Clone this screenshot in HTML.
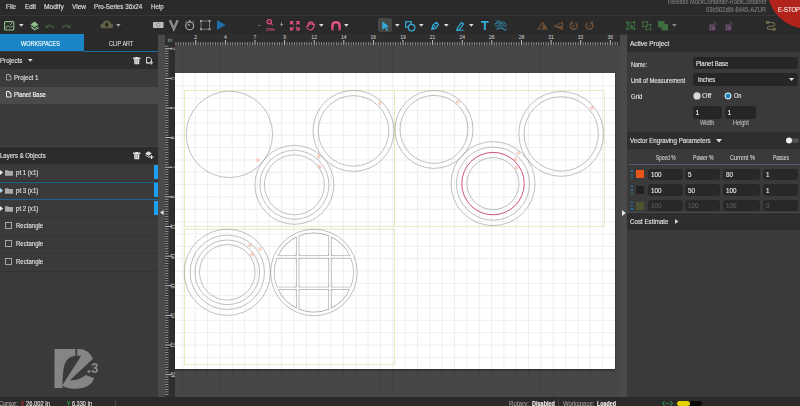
<!DOCTYPE html><html><head><meta charset="utf-8"><style>
*{margin:0;padding:0;box-sizing:border-box}
html,body{width:800px;height:406px;overflow:hidden;background:#2b2b2b;font-family:"Liberation Sans", sans-serif;}
.a{position:absolute}
.t{position:absolute;white-space:nowrap;line-height:1;transform-origin:0 50%;-webkit-text-stroke:0.12px currentColor}
svg{position:absolute;overflow:visible}
</style></head><body>
<div class="a" style="left:0px;top:0px;width:800px;height:15px;background:#2a2a2a;"></div><div class="a" style="left:0px;top:15px;width:800px;height:1px;background:#363636;"></div><div class="t" style="left:6.00px;top:2.80px;font-size:7px;color:#e2e2e2;transform:scaleX(0.887);">File</div><div class="t" style="left:24.50px;top:2.80px;font-size:7px;color:#e2e2e2;transform:scaleX(0.912);">Edit</div><div class="t" style="left:44.00px;top:2.80px;font-size:7px;color:#e2e2e2;transform:scaleX(0.960);">Modify</div><div class="t" style="left:72.00px;top:2.80px;font-size:7px;color:#e2e2e2;transform:scaleX(0.931);">View</div><div class="t" style="left:94.30px;top:2.80px;font-size:7px;color:#e2e2e2;transform:scaleX(0.891);">Pro-Series 36x24</div><div class="t" style="left:151.00px;top:2.80px;font-size:7px;color:#e2e2e2;transform:scaleX(0.889);">Help</div><div class="t" style="left:667.70px;top:-0.70px;font-size:6.6px;color:#7e7e7e;transform:scaleX(0.849);">Release MockContainer-RockContainer</div><div class="t" style="left:706.30px;top:6.80px;font-size:6.6px;color:#7e7e7e;transform:scaleX(0.881);">03b502d6f-8445-AZUR</div><div class="a" style="left:0px;top:16px;width:800px;height:18px;background:#2a2a2a;"></div><div class="a" style="left:0px;top:34px;width:800px;height:1px;background:#383838;"></div><svg style="left:760px;top:-20px;" width="60" height="60" viewBox="0 0 60 60"><circle cx="46" cy="10" r="38.3" fill="#b2231c"/></svg><div class="t" style="left:778.00px;top:6.60px;font-size:6.8px;color:#f4f4f4;transform:scaleX(0.873);">E-STOP</div><svg style="left:4px;top:20.5px;" width="10.5" height="9.5" viewBox="0 0 10.5 9.5"><rect x="0.6" y="0.6" width="9.2" height="8.4" rx="1" fill="none" stroke="#8fc08a" stroke-width="1.1"/><path d="M1.5 7.5 L4 4.5 L6 6.5 L7.5 5 L9 6.5" fill="none" stroke="#8fc08a" stroke-width="1"/><path d="M6 4 L8 2" stroke="#8fc08a" stroke-width="1"/></svg><svg style="left:18.5px;top:24.3px;" width="4.6" height="2.8" viewBox="0 0 4.6 2.8"><path d="M0 0 L4.6 0 L2.3 2.8 Z" fill="#e0e0e0"/></svg><svg style="left:29.5px;top:20.5px;" width="9.5" height="9.5" viewBox="0 0 9.5 9.5"><path d="M4.5 0.5 L8.5 3.5 L4.5 6.3 L0.5 3.5 Z" fill="#8fc08a"/><path d="M0.8 5.3 L4.5 8 L8.3 5.3" fill="none" stroke="#8fc08a" stroke-width="1"/><path d="M1.5 6.8 L4.5 9 L8.8 6.8" fill="none" stroke="#8fc08a" stroke-width="0.9"/></svg><svg style="left:44.5px;top:23px;" width="10" height="6" viewBox="0 0 10 6"><path d="M2.5 3.2 Q5.5 0.8 8.8 5" fill="none" stroke="#3e583b" stroke-width="1.7"/><path d="M0.2 1.5 L0.5 5.5 L4.3 4.5 Z" fill="#3e583b"/></svg><svg style="left:61px;top:23px;" width="10" height="6" viewBox="0 0 10 6"><path d="M7.5 3.2 Q4.5 0.8 1.2 5" fill="none" stroke="#3e583b" stroke-width="1.7"/><path d="M9.8 1.5 L9.5 5.5 L5.7 4.5 Z" fill="#3e583b"/></svg><svg style="left:100.3px;top:20.3px;" width="13.5" height="8.5" viewBox="0 0 13.5 8.5"><path d="M3 8.3 Q0 8.3 0.3 5.5 Q0.7 3.6 2.8 3.7 Q3.5 0.3 7 0.4 Q10.3 0.5 10.8 3.6 Q13.4 3.9 13.3 6.2 Q13.1 8.3 10.5 8.3 Z" fill="#626046"/><path d="M6.7 2.3 L9 4.8 L7.6 4.8 L7.6 7 L5.8 7 L5.8 4.8 L4.4 4.8 Z" fill="#1f1f1f"/></svg><svg style="left:116.3px;top:24.2px;" width="4.6" height="2.8" viewBox="0 0 4.6 2.8"><path d="M0 0 L4.6 0 L2.3 2.8 Z" fill="#a8a8a8"/></svg><svg style="left:152.6px;top:21.9px;" width="10.5" height="6" viewBox="0 0 10.5 6"><rect x="0" y="0" width="10.5" height="5.9" rx="0.6" fill="#bdbdbd"/><circle cx="5.25" cy="3" r="1.9" fill="none" stroke="#8a8a8a" stroke-width="0.8"/></svg><svg style="left:168.8px;top:19.8px;" width="9.6" height="10" viewBox="0 0 9.6 10"><path d="M0.9 0.3 L4.8 9 L8.7 0.3" fill="none" stroke="#a0a0a0" stroke-width="2.2"/><path d="M0.9 0.3 L4.8 9 L8.7 0.3" fill="none" stroke="#555" stroke-width="0.5"/></svg><svg style="left:184.9px;top:19.8px;" width="9.4" height="10.5" viewBox="0 0 9.4 10.5"><circle cx="4.7" cy="5.9" r="3.9" fill="none" stroke="#b8b8b8" stroke-width="1.1"/><path d="M4.7 5.9 L3.2 4.2" stroke="#b8b8b8" stroke-width="1.1"/><path d="M3.7 0.8 L5.7 0.8 M4.7 0.8 L4.7 2" stroke="#b8b8b8" stroke-width="0.9"/><path d="M0.5 2.2 L1.5 1.3 M8.9 2.2 L7.9 1.3" stroke="#b8b8b8" stroke-width="0.9"/></svg><svg style="left:199.8px;top:19.8px;" width="10.6" height="10.2" viewBox="0 0 10.6 10.2"><rect x="1" y="1" width="8.6" height="8.2" fill="none" stroke="#8c8c8c" stroke-width="0.8"/><g fill="#a0a0a0"><rect x="0" y="0" width="2" height="2"/><rect x="8.6" y="0" width="2" height="2"/><rect x="0" y="8.2" width="2" height="2"/><rect x="8.6" y="8.2" width="2" height="2"/></g></svg><svg style="left:216.7px;top:20.1px;" width="9" height="10" viewBox="0 0 9 10"><path d="M0 0 L8.7 5 L0 10 Z" fill="#1f6ea8"/></svg><div class="t" style="left:258.00px;top:22.30px;font-size:6px;color:#c0c0c0;transform:scaleX(1.251);">-</div><svg style="left:266px;top:19.4px;" width="7.5" height="6" viewBox="0 0 7.5 6"><circle cx="3.3" cy="2.7" r="2.2" fill="none" stroke="#e2507f" stroke-width="1.1"/><path d="M4.9 4.3 L6.6 5.8" stroke="#e2507f" stroke-width="1.3"/><path d="M2.3 2.7 L4.3 2.7" stroke="#e2507f" stroke-width="0.7"/></svg><div class="t" style="left:266.00px;top:27.65px;font-size:4.3px;color:#e2507f;transform:scaleX(0.988);">23%</div><div class="t" style="left:279.80px;top:22.05px;font-size:6.5px;color:#c8c8c8;transform:scaleX(0.896);">+</div><svg style="left:289.5px;top:20.7px;" width="9.6" height="9.6" viewBox="0 0 9.6 9.6"><g stroke="#e2507f" stroke-width="1.2" fill="none"><path d="M0.6 3.4 L0.6 0.6 L3.4 0.6 M0.6 0.6 L3.6 3.6"/><path d="M9 3.4 L9 0.6 L6.2 0.6 M9 0.6 L6 3.6"/><path d="M0.6 6.2 L0.6 9 L3.4 9 M0.6 9 L3.6 6"/><path d="M9 6.2 L9 9 L6.2 9 M9 9 L6 6"/></g></svg><svg style="left:305.8px;top:20.6px;" width="10" height="10" viewBox="0 0 10 10"><path d="M2.3 5 L2.3 2.6 Q2.3 1.6 3.3 1.8 L3.5 4 L3.5 1.2 Q4.5 0.4 5 1.3 L5 3.8 L5.2 1.2 Q6.2 0.6 6.7 1.6 L6.6 4 Q7.2 2.8 8.3 3.2 Q8.7 4.2 8 5.5 Q7 8.7 4.8 9 Q2.5 9.2 1.2 7.2 Q0.2 5.8 1 5 Q1.6 4.6 2.3 5 Z" fill="none" stroke="#e2507f" stroke-width="1.1"/></svg><svg style="left:318.8px;top:24.3px;" width="4.6" height="2.8" viewBox="0 0 4.6 2.8"><path d="M0 0 L4.6 0 L2.3 2.8 Z" fill="#e0e0e0"/></svg><svg style="left:330.5px;top:20.8px;" width="10" height="9.5" viewBox="0 0 10 9.5"><path d="M1.4 9.3 L1.4 5 Q1.4 1.3 5 1.3 Q8.6 1.3 8.6 5 L8.6 9.3" fill="none" stroke="#e2507f" stroke-width="2.6"/><path d="M0.1 7.8 L2.7 7.8 M7.3 7.8 L9.9 7.8" stroke="#2a2a2a" stroke-width="0.5"/></svg><svg style="left:343.5px;top:24.3px;" width="4.6" height="2.8" viewBox="0 0 4.6 2.8"><path d="M0 0 L4.6 0 L2.3 2.8 Z" fill="#e0e0e0"/></svg><div class="a" style="left:378.1px;top:18.1px;width:14.1px;height:14.3px;background:#474747;border-radius:2px"></div><svg style="left:381.5px;top:20.5px;" width="7.5" height="10" viewBox="0 0 7.5 10"><path d="M0.3 0.3 L7 5.8 L4.3 6 L6 9.3 L4.7 9.8 L3.1 6.5 L0.3 8.8 Z" fill="#34aedb"/></svg><svg style="left:394.8px;top:24.3px;" width="4.6" height="2.8" viewBox="0 0 4.6 2.8"><path d="M0 0 L4.6 0 L2.3 2.8 Z" fill="#e0e0e0"/></svg><svg style="left:405px;top:20.8px;" width="10.5" height="10.5" viewBox="0 0 10.5 10.5"><rect x="0.7" y="0.7" width="5.5" height="5.5" fill="none" stroke="#34aedb" stroke-width="1.2"/><circle cx="6.6" cy="6.6" r="3.3" fill="#2a2a2a" stroke="#34aedb" stroke-width="1.2"/></svg><svg style="left:419.2px;top:24.3px;" width="4.6" height="2.8" viewBox="0 0 4.6 2.8"><path d="M0 0 L4.6 0 L2.3 2.8 Z" fill="#e0e0e0"/></svg><svg style="left:430.5px;top:20.8px;" width="8" height="9" viewBox="0 0 8 9"><path d="M0.8 8.3 L1.8 4 L5.5 1.3 L7.5 3.5 L4.8 7.2 Z" fill="none" stroke="#34aedb" stroke-width="1.2"/><circle cx="3.6" cy="5" r="0.9" fill="#34aedb"/><path d="M0.8 8.3 L3 6" stroke="#34aedb" stroke-width="0.8"/></svg><svg style="left:444px;top:24.3px;" width="4.6" height="2.8" viewBox="0 0 4.6 2.8"><path d="M0 0 L4.6 0 L2.3 2.8 Z" fill="#e0e0e0"/></svg><svg style="left:455.5px;top:20.8px;" width="8" height="9.5" viewBox="0 0 8 9.5"><path d="M1.2 7.5 L5.5 1.3 L7.5 2.8 L3.3 9 L1 9.2 Z" fill="none" stroke="#34aedb" stroke-width="1.2"/><path d="M0 9.3 L7.8 9.3" stroke="#34aedb" stroke-width="0.9"/></svg><svg style="left:468.8px;top:24.3px;" width="4.6" height="2.8" viewBox="0 0 4.6 2.8"><path d="M0 0 L4.6 0 L2.3 2.8 Z" fill="#e0e0e0"/></svg><svg style="left:480.7px;top:20.7px;" width="7.6" height="9.1" viewBox="0 0 7.6 9.1"><path d="M0 0 L7.6 0 L7.6 1.8 L4.75 1.8 L4.75 9.1 L2.85 9.1 L2.85 1.8 L0 1.8 Z" fill="#34aedb"/></svg><svg style="left:494px;top:20.3px;" width="13.5" height="10.7" viewBox="0 0 13.5 10.7"><g stroke="#34aedb" fill="none" opacity="0.85"><path d="M2 0.5 L5.5 5" stroke-width="0.9"/><path d="M4.5 0.5 L7.5 4.5" stroke-width="1.1"/><path d="M0.5 4.2 L4 2.5 M6.5 2.2 L9.5 4.5 M8.5 1.5 L12.5 4.5" stroke-width="0.9"/><path d="M0.8 5.8 L12.8 5.8" stroke-width="0.6"/><path d="M1.5 6.8 L12.5 6.8" stroke-width="0.5" opacity="0.5"/><path d="M2.5 10 L4.5 8 M3 8.2 L9 8.2 M8.5 8 L10.5 10 M9.5 9.8 L12.5 9.8" stroke-width="1"/></g></svg><svg style="left:537.8px;top:22px;" width="9.2" height="7.3" viewBox="0 0 9.2 7.3"><path d="M4.6 0.3 L9 7 L0.2 7 Z" fill="none" stroke="#6b4f37" stroke-width="1.1"/><path d="M4.6 0.3 L4.6 7 L9 7 Z" fill="#6b4f37"/></svg><svg style="left:554.3px;top:21.8px;" width="8.7" height="7.8" viewBox="0 0 8.7 7.8"><path d="M8.4 0.3 L8.4 7.5 L0.3 3.9 Z" fill="none" stroke="#6b4f37" stroke-width="1.1"/><path d="M8.4 3.9 L8.4 7.5 L0.3 3.9 Z" fill="#6b4f37"/></svg><svg style="left:569px;top:21.3px;" width="9.2" height="9" viewBox="0 0 9.2 9"><path d="M3.2 1.9 A3.4 3.4 0 1 0 6.4 1.9" fill="none" stroke="#6b4f37" stroke-width="1.5"/><path d="M0.8 0.3 L4.6 1.2 L2 3.9 Z" fill="#6b4f37"/><circle cx="4.6" cy="5" r="0.9" fill="#6b4f37"/></svg><svg style="left:584.8px;top:21.3px;" width="9.2" height="9" viewBox="0 0 9.2 9"><path d="M6 1.9 A3.4 3.4 0 1 1 2.8 1.9" fill="none" stroke="#6b4f37" stroke-width="1.5"/><path d="M8.4 0.3 L4.6 1.2 L7.2 3.9 Z" fill="#6b4f37"/><circle cx="4.6" cy="5" r="0.9" fill="#6b4f37"/></svg><svg style="left:626px;top:20.8px;" width="9.6" height="9.2" viewBox="0 0 9.6 9.2"><rect x="1.3" y="1.3" width="7" height="6.6" fill="none" stroke="#3f6d40" stroke-width="0.8"/><g fill="#3f6d40"><circle cx="1.3" cy="1.3" r="1.2"/><circle cx="8.3" cy="1.3" r="1.2"/><circle cx="1.3" cy="7.9" r="1.2"/><circle cx="8.3" cy="7.9" r="1.2"/></g><circle cx="3.8" cy="4" r="1.5" fill="none" stroke="#3f6d40" stroke-width="0.8"/><rect x="4.6" y="4.5" width="2.5" height="2.5" fill="#3f6d40"/></svg><svg style="left:642px;top:20.8px;" width="9.6" height="9.2" viewBox="0 0 9.6 9.2"><g fill="none" stroke="#3f6d40" stroke-width="0.8"><rect x="1" y="1" width="4.5" height="4.5"/><rect x="4.2" y="3.8" width="4.5" height="4.5"/></g><g fill="#3f6d40"><circle cx="1" cy="1" r="1"/><circle cx="5.5" cy="1" r="1"/><circle cx="1" cy="5.5" r="1"/><circle cx="8.7" cy="3.8" r="1"/><circle cx="4.2" cy="8.3" r="1"/><circle cx="8.7" cy="8.3" r="1"/></g></svg><svg style="left:657.5px;top:20.9px;" width="10" height="9.4" viewBox="0 0 10 9.4"><rect x="0" y="0" width="6.6" height="6.4" fill="#3f6d40"/><rect x="3.4" y="3" width="6.6" height="6.4" fill="#3f6d40"/></svg><svg style="left:672px;top:24.4px;" width="4.6" height="2.8" viewBox="0 0 4.6 2.8"><path d="M0 0 L4.6 0 L2.3 2.8 Z" fill="#8a8a8a"/></svg><svg style="left:708.5px;top:20.5px;" width="8.5" height="9.5" viewBox="0 0 8.5 9.5"><rect x="0.5" y="3.5" width="5.5" height="5.8" fill="#6e4e70"/><rect x="2.5" y="5.2" width="4.2" height="4.3" fill="#6e4e70" stroke="#2a2a2a" stroke-width="0.5"/><path d="M4.5 1 Q7 1 7.5 3.8" fill="none" stroke="#6e4e70" stroke-width="0.9"/></svg><svg style="left:725px;top:20.5px;" width="8.5" height="9.5" viewBox="0 0 8.5 9.5"><rect x="0.5" y="3.5" width="5.5" height="5.8" fill="#6e4e70"/><rect x="2.2" y="5" width="4.2" height="4.3" fill="#6e4e70" stroke="#2a2a2a" stroke-width="0.4"/><path d="M4.5 1 Q7 1 7.5 3.8" fill="none" stroke="#6e4e70" stroke-width="0.9"/></svg><svg style="left:765.5px;top:21px;" width="10" height="9.5" viewBox="0 0 10 9.5"><path d="M2.3 1.5 L6.8 1.5 Q8.8 1.5 8.8 3.5 Q8.8 5.3 6.8 5.3 L3.2 5.3 Q1.2 5.3 1.2 6.9 Q1.2 8.3 3.2 8.3 L7.3 8.3" fill="none" stroke="#8f8a5a" stroke-width="0.8"/><rect x="0.4" y="0.5" width="1.9" height="1.9" fill="none" stroke="#8f8a5a" stroke-width="0.7"/><rect x="7.4" y="7.3" width="1.9" height="1.9" fill="none" stroke="#8f8a5a" stroke-width="0.7"/></svg><div class="a" style="left:0px;top:35px;width:158px;height:362px;background:#3a3a3a;"></div><div class="a" style="left:0px;top:34px;width:84px;height:17px;background:#1a86c8;"></div><div class="a" style="left:84px;top:34px;width:74px;height:17px;background:#2a2a2a;"></div><div class="a" style="left:84px;top:51px;width:74px;height:1px;background:#1a6ca3;"></div><div class="t" style="left:21.20px;top:40.00px;font-size:7px;color:#ffffff;transform:scaleX(0.783);">WORKSPACES</div><div class="t" style="left:108.80px;top:40.00px;font-size:7px;color:#d8d8d8;transform:scaleX(0.790);">CLIP ART</div><div class="a" style="left:0px;top:52px;width:158px;height:17px;background:#2c2c2c;"></div><div class="t" style="left:0.00px;top:56.50px;font-size:7px;color:#e4e4e4;transform:scaleX(0.882);">Projects</div><div class="a" style="left:0px;top:69px;width:158px;height:18px;background:#3a3a3a;"></div><div class="a" style="left:0px;top:87px;width:158px;height:17px;background:#4a4a4a;"></div><div class="t" style="left:13.80px;top:73.60px;font-size:7px;color:#e0e0e0;transform:scaleX(0.883);">Project 1</div><div class="t" style="left:13.80px;top:91.00px;font-size:7px;color:#ffffff;transform:scaleX(0.845);">Planet Base</div><div class="a" style="left:0px;top:146px;width:158px;height:1px;background:#454545;"></div><div class="a" style="left:0px;top:147px;width:158px;height:17px;background:#2c2c2c;"></div><div class="t" style="left:0.00px;top:151.50px;font-size:7px;color:#e4e4e4;transform:scaleX(0.857);">Layers &amp; Objects</div><div class="a" style="left:0px;top:181px;width:158px;height:1px;background:#333333;"></div><div class="t" style="left:15.90px;top:168.50px;font-size:7px;color:#e4e4e4;transform:scaleX(0.869);">pt 1 (x1)</div><div class="a" style="left:154px;top:165px;width:3.6px;height:14.2px;background:#1aa0ee;"></div><div class="a" style="left:0px;top:199px;width:158px;height:1px;background:#333333;"></div><div class="t" style="left:15.90px;top:186.50px;font-size:7px;color:#e4e4e4;transform:scaleX(0.869);">pt 3 (x1)</div><div class="a" style="left:154px;top:183px;width:3.6px;height:14.2px;background:#1aa0ee;"></div><div class="a" style="left:0px;top:217px;width:158px;height:1px;background:#333333;"></div><div class="t" style="left:15.90px;top:204.50px;font-size:7px;color:#e4e4e4;transform:scaleX(0.869);">pt 2 (x1)</div><div class="a" style="left:154px;top:201px;width:3.6px;height:14.2px;background:#1aa0ee;"></div><div class="a" style="left:0px;top:235px;width:158px;height:1px;background:#333333;"></div><div class="t" style="left:15.90px;top:221.50px;font-size:7px;color:#e4e4e4;transform:scaleX(0.863);">Rectangle</div><div class="a" style="left:0px;top:253px;width:158px;height:1px;background:#333333;"></div><div class="t" style="left:15.90px;top:239.50px;font-size:7px;color:#e4e4e4;transform:scaleX(0.863);">Rectangle</div><div class="a" style="left:0px;top:271px;width:158px;height:1px;background:#333333;"></div><div class="t" style="left:15.90px;top:257.50px;font-size:7px;color:#e4e4e4;transform:scaleX(0.863);">Rectangle</div><div class="a" style="left:0px;top:182px;width:158px;height:1px;background:#1c6593;"></div><div class="a" style="left:0px;top:199px;width:158px;height:1px;background:#1c6593;"></div><div class="a" style="left:158px;top:35px;width:7px;height:362px;background:#4a4a4a;"></div><svg style="left:159.6px;top:210px;" width="3.6" height="5" viewBox="0 0 3.6 5"><path d="M3.6 0 L3.6 5 L0 2.5 Z" fill="#e0e0e0"/></svg><svg style="left:28px;top:59px;" width="4.6" height="2.8" viewBox="0 0 4.6 2.8"><path d="M0 0 L4.6 0 L2.3 2.8 Z" fill="#e8e8e8"/></svg><svg style="left:132.75px;top:56.5px;" width="7.5" height="7.5" viewBox="0 0 7.5 7.5"><rect x="0" y="0.6" width="7.5" height="1.3" rx="0.5" fill="#e0e0e0"/><rect x="2.5" y="0" width="2.5" height="1" fill="#e0e0e0"/><path d="M1 2.3 L6.5 2.3 L6.1 7.3 L1.4 7.3 Z" fill="#e0e0e0"/><rect x="2.6" y="3.2" width="0.6" height="3.3" fill="#777"/><rect x="4.3" y="3.2" width="0.6" height="3.3" fill="#777"/></svg><svg style="left:146px;top:57px;" width="7.5" height="7.5" viewBox="0 0 7.5 7.5"><path d="M0.5 0.5 L3.8 0.5 L5.5 2.3 L5.5 4.5 M3.5 6 L0.5 6 Z" fill="none" stroke="#e0e0e0" stroke-width="0.9"/><path d="M0.5 0.5 L0.5 6" stroke="#e0e0e0" stroke-width="0.9"/><path d="M5.2 4 L5.2 7.5 M3.5 5.8 L7 5.8" stroke="#e0e0e0" stroke-width="1.1"/></svg><svg style="left:5.8px;top:73.6px;" width="5.5" height="6.5" viewBox="0 0 5.5 6.5"><path d="M0.5 0.5 L3.2 0.5 L5 2.3 L5 6 L0.5 6 Z" fill="none" stroke="#a8a8a8" stroke-width="0.9"/><path d="M3.2 0.5 L3.2 2.3 L5 2.3" fill="none" stroke="#a8a8a8" stroke-width="0.6"/></svg><svg style="left:5.8px;top:91.3px;" width="5.5" height="6.5" viewBox="0 0 5.5 6.5"><path d="M0.5 0.5 L3.2 0.5 L5 2.3 L5 6 L0.5 6 Z" fill="none" stroke="#ffffff" stroke-width="0.9"/><path d="M3.2 0.5 L3.2 2.3 L5 2.3" fill="none" stroke="#ffffff" stroke-width="0.6"/></svg><svg style="left:132.75px;top:151.5px;" width="7.5" height="7.5" viewBox="0 0 7.5 7.5"><rect x="0" y="0.6" width="7.5" height="1.3" rx="0.5" fill="#e0e0e0"/><rect x="2.5" y="0" width="2.5" height="1" fill="#e0e0e0"/><path d="M1 2.3 L6.5 2.3 L6.1 7.3 L1.4 7.3 Z" fill="#e0e0e0"/><rect x="2.6" y="3.2" width="0.6" height="3.3" fill="#777"/><rect x="4.3" y="3.2" width="0.6" height="3.3" fill="#777"/></svg><svg style="left:145px;top:151px;" width="8.5" height="8" viewBox="0 0 8.5 8"><path d="M3.5 0.3 L6.8 2.5 L3.5 4.7 L0.2 2.5 Z" fill="#e0e0e0"/><path d="M0.3 4 L3.5 6.2 L5 5.2" fill="none" stroke="#e0e0e0" stroke-width="0.8"/><path d="M6.5 4.2 L6.5 8 M4.6 6.1 L8.4 6.1" stroke="#e0e0e0" stroke-width="1.1"/></svg><svg style="left:0px;top:170px;" width="3.2" height="5" viewBox="0 0 3.2 5"><path d="M0 0 L3.2 2.5 L0 5 Z" fill="#e8e8e8"/></svg><svg style="left:4.9px;top:169.5px;" width="8" height="5.8" viewBox="0 0 8 5.8"><path d="M0 0.3 L3 0.3 L3.8 1.1 L8 1.1 L8 5.8 L0 5.8 Z" fill="#a9a9a9"/></svg><svg style="left:0px;top:188px;" width="3.2" height="5" viewBox="0 0 3.2 5"><path d="M0 0 L3.2 2.5 L0 5 Z" fill="#a8d4f0"/></svg><svg style="left:4.9px;top:187.5px;" width="8" height="5.8" viewBox="0 0 8 5.8"><path d="M0 0.3 L3 0.3 L3.8 1.1 L8 1.1 L8 5.8 L0 5.8 Z" fill="#a9a9a9"/></svg><svg style="left:0px;top:206px;" width="3.2" height="5" viewBox="0 0 3.2 5"><path d="M0 0 L3.2 2.5 L0 5 Z" fill="#e8e8e8"/></svg><svg style="left:4.9px;top:205.5px;" width="8" height="5.8" viewBox="0 0 8 5.8"><path d="M0 0.3 L3 0.3 L3.8 1.1 L8 1.1 L8 5.8 L0 5.8 Z" fill="#a9a9a9"/></svg><svg style="left:4.9px;top:222.3px;" width="7" height="7" viewBox="0 0 7 7"><rect x="0.5" y="0.5" width="6" height="6" fill="none" stroke="#b0b0b0" stroke-width="0.9"/></svg><svg style="left:4.9px;top:240.3px;" width="7" height="7" viewBox="0 0 7 7"><rect x="0.5" y="0.5" width="6" height="6" fill="none" stroke="#b0b0b0" stroke-width="0.9"/></svg><svg style="left:4.9px;top:258.3px;" width="7" height="7" viewBox="0 0 7 7"><rect x="0.5" y="0.5" width="6" height="6" fill="none" stroke="#b0b0b0" stroke-width="0.9"/></svg><div class="a" style="left:165px;top:34px;width:455px;height:11px;background:#2e2e2e;"></div><div class="a" style="left:165px;top:45px;width:10px;height:352px;background:#2e2e2e;"></div><svg style="left:165px;top:34px;" width="455" height="11" viewBox="0 0 455 11"><rect x="10.57" y="8.2" width="0.8" height="2.8" fill="#a8a8a8"/><rect x="13.04" y="8.2" width="0.8" height="2.8" fill="#a8a8a8"/><rect x="15.51" y="8.2" width="0.8" height="2.8" fill="#a8a8a8"/><rect x="17.97" y="8.2" width="0.8" height="2.8" fill="#a8a8a8"/><rect x="20.44" y="8.2" width="0.8" height="2.8" fill="#a8a8a8"/><rect x="22.91" y="8.2" width="0.8" height="2.8" fill="#a8a8a8"/><rect x="25.37" y="8.2" width="0.8" height="2.8" fill="#a8a8a8"/><rect x="27.84" y="8.2" width="0.8" height="2.8" fill="#a8a8a8"/><rect x="30.31" y="6" width="0.9" height="5" fill="#d0d0d0"/><rect x="32.78" y="8.2" width="0.8" height="2.8" fill="#a8a8a8"/><rect x="35.24" y="8.2" width="0.8" height="2.8" fill="#a8a8a8"/><rect x="37.71" y="8.2" width="0.8" height="2.8" fill="#a8a8a8"/><rect x="40.18" y="8.2" width="0.8" height="2.8" fill="#a8a8a8"/><rect x="42.65" y="8.2" width="0.8" height="2.8" fill="#a8a8a8"/><rect x="45.11" y="8.2" width="0.8" height="2.8" fill="#a8a8a8"/><rect x="47.58" y="8.2" width="0.8" height="2.8" fill="#a8a8a8"/><rect x="50.05" y="8.2" width="0.8" height="2.8" fill="#a8a8a8"/><rect x="52.52" y="8.2" width="0.8" height="2.8" fill="#a8a8a8"/><rect x="54.98" y="8.2" width="0.8" height="2.8" fill="#a8a8a8"/><rect x="57.45" y="8.2" width="0.8" height="2.8" fill="#a8a8a8"/><rect x="59.92" y="6" width="0.9" height="5" fill="#d0d0d0"/><rect x="62.39" y="8.2" width="0.8" height="2.8" fill="#a8a8a8"/><rect x="64.85" y="8.2" width="0.8" height="2.8" fill="#a8a8a8"/><rect x="67.32" y="8.2" width="0.8" height="2.8" fill="#a8a8a8"/><rect x="69.79" y="8.2" width="0.8" height="2.8" fill="#a8a8a8"/><rect x="72.26" y="8.2" width="0.8" height="2.8" fill="#a8a8a8"/><rect x="74.72" y="8.2" width="0.8" height="2.8" fill="#a8a8a8"/><rect x="77.19" y="8.2" width="0.8" height="2.8" fill="#a8a8a8"/><rect x="79.66" y="8.2" width="0.8" height="2.8" fill="#a8a8a8"/><rect x="82.13" y="8.2" width="0.8" height="2.8" fill="#a8a8a8"/><rect x="84.59" y="8.2" width="0.8" height="2.8" fill="#a8a8a8"/><rect x="87.06" y="8.2" width="0.8" height="2.8" fill="#a8a8a8"/><rect x="89.53" y="6" width="0.9" height="5" fill="#d0d0d0"/><rect x="92.00" y="8.2" width="0.8" height="2.8" fill="#a8a8a8"/><rect x="94.47" y="8.2" width="0.8" height="2.8" fill="#a8a8a8"/><rect x="96.93" y="8.2" width="0.8" height="2.8" fill="#a8a8a8"/><rect x="99.40" y="8.2" width="0.8" height="2.8" fill="#a8a8a8"/><rect x="101.87" y="8.2" width="0.8" height="2.8" fill="#a8a8a8"/><rect x="104.34" y="8.2" width="0.8" height="2.8" fill="#a8a8a8"/><rect x="106.80" y="8.2" width="0.8" height="2.8" fill="#a8a8a8"/><rect x="109.27" y="8.2" width="0.8" height="2.8" fill="#a8a8a8"/><rect x="111.74" y="8.2" width="0.8" height="2.8" fill="#a8a8a8"/><rect x="114.21" y="8.2" width="0.8" height="2.8" fill="#a8a8a8"/><rect x="116.67" y="8.2" width="0.8" height="2.8" fill="#a8a8a8"/><rect x="119.14" y="6" width="0.9" height="5" fill="#d0d0d0"/><rect x="121.61" y="8.2" width="0.8" height="2.8" fill="#a8a8a8"/><rect x="124.07" y="8.2" width="0.8" height="2.8" fill="#a8a8a8"/><rect x="126.54" y="8.2" width="0.8" height="2.8" fill="#a8a8a8"/><rect x="129.01" y="8.2" width="0.8" height="2.8" fill="#a8a8a8"/><rect x="131.48" y="8.2" width="0.8" height="2.8" fill="#a8a8a8"/><rect x="133.94" y="8.2" width="0.8" height="2.8" fill="#a8a8a8"/><rect x="136.41" y="8.2" width="0.8" height="2.8" fill="#a8a8a8"/><rect x="138.88" y="8.2" width="0.8" height="2.8" fill="#a8a8a8"/><rect x="141.35" y="8.2" width="0.8" height="2.8" fill="#a8a8a8"/><rect x="143.81" y="8.2" width="0.8" height="2.8" fill="#a8a8a8"/><rect x="146.28" y="8.2" width="0.8" height="2.8" fill="#a8a8a8"/><rect x="148.75" y="6" width="0.9" height="5" fill="#d0d0d0"/><rect x="151.22" y="8.2" width="0.8" height="2.8" fill="#a8a8a8"/><rect x="153.68" y="8.2" width="0.8" height="2.8" fill="#a8a8a8"/><rect x="156.15" y="8.2" width="0.8" height="2.8" fill="#a8a8a8"/><rect x="158.62" y="8.2" width="0.8" height="2.8" fill="#a8a8a8"/><rect x="161.09" y="8.2" width="0.8" height="2.8" fill="#a8a8a8"/><rect x="163.55" y="8.2" width="0.8" height="2.8" fill="#a8a8a8"/><rect x="166.02" y="8.2" width="0.8" height="2.8" fill="#a8a8a8"/><rect x="168.49" y="8.2" width="0.8" height="2.8" fill="#a8a8a8"/><rect x="170.96" y="8.2" width="0.8" height="2.8" fill="#a8a8a8"/><rect x="173.42" y="8.2" width="0.8" height="2.8" fill="#a8a8a8"/><rect x="175.89" y="8.2" width="0.8" height="2.8" fill="#a8a8a8"/><rect x="178.36" y="6" width="0.9" height="5" fill="#d0d0d0"/><rect x="180.83" y="8.2" width="0.8" height="2.8" fill="#a8a8a8"/><rect x="183.29" y="8.2" width="0.8" height="2.8" fill="#a8a8a8"/><rect x="185.76" y="8.2" width="0.8" height="2.8" fill="#a8a8a8"/><rect x="188.23" y="8.2" width="0.8" height="2.8" fill="#a8a8a8"/><rect x="190.70" y="8.2" width="0.8" height="2.8" fill="#a8a8a8"/><rect x="193.16" y="8.2" width="0.8" height="2.8" fill="#a8a8a8"/><rect x="195.63" y="8.2" width="0.8" height="2.8" fill="#a8a8a8"/><rect x="198.10" y="8.2" width="0.8" height="2.8" fill="#a8a8a8"/><rect x="200.57" y="8.2" width="0.8" height="2.8" fill="#a8a8a8"/><rect x="203.03" y="8.2" width="0.8" height="2.8" fill="#a8a8a8"/><rect x="205.50" y="8.2" width="0.8" height="2.8" fill="#a8a8a8"/><rect x="207.97" y="6" width="0.9" height="5" fill="#d0d0d0"/><rect x="210.44" y="8.2" width="0.8" height="2.8" fill="#a8a8a8"/><rect x="212.90" y="8.2" width="0.8" height="2.8" fill="#a8a8a8"/><rect x="215.37" y="8.2" width="0.8" height="2.8" fill="#a8a8a8"/><rect x="217.84" y="8.2" width="0.8" height="2.8" fill="#a8a8a8"/><rect x="220.31" y="8.2" width="0.8" height="2.8" fill="#a8a8a8"/><rect x="222.77" y="8.2" width="0.8" height="2.8" fill="#a8a8a8"/><rect x="225.24" y="8.2" width="0.8" height="2.8" fill="#a8a8a8"/><rect x="227.71" y="8.2" width="0.8" height="2.8" fill="#a8a8a8"/><rect x="230.18" y="8.2" width="0.8" height="2.8" fill="#a8a8a8"/><rect x="232.64" y="8.2" width="0.8" height="2.8" fill="#a8a8a8"/><rect x="235.11" y="8.2" width="0.8" height="2.8" fill="#a8a8a8"/><rect x="237.58" y="6" width="0.9" height="5" fill="#d0d0d0"/><rect x="240.05" y="8.2" width="0.8" height="2.8" fill="#a8a8a8"/><rect x="242.51" y="8.2" width="0.8" height="2.8" fill="#a8a8a8"/><rect x="244.98" y="8.2" width="0.8" height="2.8" fill="#a8a8a8"/><rect x="247.45" y="8.2" width="0.8" height="2.8" fill="#a8a8a8"/><rect x="249.92" y="8.2" width="0.8" height="2.8" fill="#a8a8a8"/><rect x="252.38" y="8.2" width="0.8" height="2.8" fill="#a8a8a8"/><rect x="254.85" y="8.2" width="0.8" height="2.8" fill="#a8a8a8"/><rect x="257.32" y="8.2" width="0.8" height="2.8" fill="#a8a8a8"/><rect x="259.79" y="8.2" width="0.8" height="2.8" fill="#a8a8a8"/><rect x="262.25" y="8.2" width="0.8" height="2.8" fill="#a8a8a8"/><rect x="264.72" y="8.2" width="0.8" height="2.8" fill="#a8a8a8"/><rect x="267.19" y="6" width="0.9" height="5" fill="#d0d0d0"/><rect x="269.66" y="8.2" width="0.8" height="2.8" fill="#a8a8a8"/><rect x="272.12" y="8.2" width="0.8" height="2.8" fill="#a8a8a8"/><rect x="274.59" y="8.2" width="0.8" height="2.8" fill="#a8a8a8"/><rect x="277.06" y="8.2" width="0.8" height="2.8" fill="#a8a8a8"/><rect x="279.53" y="8.2" width="0.8" height="2.8" fill="#a8a8a8"/><rect x="282.00" y="8.2" width="0.8" height="2.8" fill="#a8a8a8"/><rect x="284.46" y="8.2" width="0.8" height="2.8" fill="#a8a8a8"/><rect x="286.93" y="8.2" width="0.8" height="2.8" fill="#a8a8a8"/><rect x="289.40" y="8.2" width="0.8" height="2.8" fill="#a8a8a8"/><rect x="291.87" y="8.2" width="0.8" height="2.8" fill="#a8a8a8"/><rect x="294.33" y="8.2" width="0.8" height="2.8" fill="#a8a8a8"/><rect x="296.80" y="6" width="0.9" height="5" fill="#d0d0d0"/><rect x="299.27" y="8.2" width="0.8" height="2.8" fill="#a8a8a8"/><rect x="301.74" y="8.2" width="0.8" height="2.8" fill="#a8a8a8"/><rect x="304.20" y="8.2" width="0.8" height="2.8" fill="#a8a8a8"/><rect x="306.67" y="8.2" width="0.8" height="2.8" fill="#a8a8a8"/><rect x="309.14" y="8.2" width="0.8" height="2.8" fill="#a8a8a8"/><rect x="311.61" y="8.2" width="0.8" height="2.8" fill="#a8a8a8"/><rect x="314.07" y="8.2" width="0.8" height="2.8" fill="#a8a8a8"/><rect x="316.54" y="8.2" width="0.8" height="2.8" fill="#a8a8a8"/><rect x="319.01" y="8.2" width="0.8" height="2.8" fill="#a8a8a8"/><rect x="321.48" y="8.2" width="0.8" height="2.8" fill="#a8a8a8"/><rect x="323.94" y="8.2" width="0.8" height="2.8" fill="#a8a8a8"/><rect x="326.41" y="6" width="0.9" height="5" fill="#d0d0d0"/><rect x="328.88" y="8.2" width="0.8" height="2.8" fill="#a8a8a8"/><rect x="331.35" y="8.2" width="0.8" height="2.8" fill="#a8a8a8"/><rect x="333.81" y="8.2" width="0.8" height="2.8" fill="#a8a8a8"/><rect x="336.28" y="8.2" width="0.8" height="2.8" fill="#a8a8a8"/><rect x="338.75" y="8.2" width="0.8" height="2.8" fill="#a8a8a8"/><rect x="341.22" y="8.2" width="0.8" height="2.8" fill="#a8a8a8"/><rect x="343.68" y="8.2" width="0.8" height="2.8" fill="#a8a8a8"/><rect x="346.15" y="8.2" width="0.8" height="2.8" fill="#a8a8a8"/><rect x="348.62" y="8.2" width="0.8" height="2.8" fill="#a8a8a8"/><rect x="351.09" y="8.2" width="0.8" height="2.8" fill="#a8a8a8"/><rect x="353.55" y="8.2" width="0.8" height="2.8" fill="#a8a8a8"/><rect x="356.02" y="6" width="0.9" height="5" fill="#d0d0d0"/><rect x="358.49" y="8.2" width="0.8" height="2.8" fill="#a8a8a8"/><rect x="360.96" y="8.2" width="0.8" height="2.8" fill="#a8a8a8"/><rect x="363.42" y="8.2" width="0.8" height="2.8" fill="#a8a8a8"/><rect x="365.89" y="8.2" width="0.8" height="2.8" fill="#a8a8a8"/><rect x="368.36" y="8.2" width="0.8" height="2.8" fill="#a8a8a8"/><rect x="370.82" y="8.2" width="0.8" height="2.8" fill="#a8a8a8"/><rect x="373.29" y="8.2" width="0.8" height="2.8" fill="#a8a8a8"/><rect x="375.76" y="8.2" width="0.8" height="2.8" fill="#a8a8a8"/><rect x="378.23" y="8.2" width="0.8" height="2.8" fill="#a8a8a8"/><rect x="380.69" y="8.2" width="0.8" height="2.8" fill="#a8a8a8"/><rect x="383.16" y="8.2" width="0.8" height="2.8" fill="#a8a8a8"/><rect x="385.63" y="6" width="0.9" height="5" fill="#d0d0d0"/><rect x="388.10" y="8.2" width="0.8" height="2.8" fill="#a8a8a8"/><rect x="390.56" y="8.2" width="0.8" height="2.8" fill="#a8a8a8"/><rect x="393.03" y="8.2" width="0.8" height="2.8" fill="#a8a8a8"/><rect x="395.50" y="8.2" width="0.8" height="2.8" fill="#a8a8a8"/><rect x="397.97" y="8.2" width="0.8" height="2.8" fill="#a8a8a8"/><rect x="400.43" y="8.2" width="0.8" height="2.8" fill="#a8a8a8"/><rect x="402.90" y="8.2" width="0.8" height="2.8" fill="#a8a8a8"/><rect x="405.37" y="8.2" width="0.8" height="2.8" fill="#a8a8a8"/><rect x="407.84" y="8.2" width="0.8" height="2.8" fill="#a8a8a8"/><rect x="410.30" y="8.2" width="0.8" height="2.8" fill="#a8a8a8"/><rect x="412.77" y="8.2" width="0.8" height="2.8" fill="#a8a8a8"/><rect x="415.24" y="6" width="0.9" height="5" fill="#d0d0d0"/><rect x="417.71" y="8.2" width="0.8" height="2.8" fill="#a8a8a8"/><rect x="420.17" y="8.2" width="0.8" height="2.8" fill="#a8a8a8"/><rect x="422.64" y="8.2" width="0.8" height="2.8" fill="#a8a8a8"/><rect x="425.11" y="8.2" width="0.8" height="2.8" fill="#a8a8a8"/><rect x="427.58" y="8.2" width="0.8" height="2.8" fill="#a8a8a8"/><rect x="430.04" y="8.2" width="0.8" height="2.8" fill="#a8a8a8"/><rect x="432.51" y="8.2" width="0.8" height="2.8" fill="#a8a8a8"/><rect x="434.98" y="8.2" width="0.8" height="2.8" fill="#a8a8a8"/><rect x="437.45" y="8.2" width="0.8" height="2.8" fill="#a8a8a8"/><rect x="439.91" y="8.2" width="0.8" height="2.8" fill="#a8a8a8"/><rect x="442.38" y="8.2" width="0.8" height="2.8" fill="#a8a8a8"/><rect x="444.85" y="6" width="0.9" height="5" fill="#d0d0d0"/><rect x="447.32" y="8.2" width="0.8" height="2.8" fill="#a8a8a8"/><rect x="449.78" y="8.2" width="0.8" height="2.8" fill="#a8a8a8"/><rect x="452.25" y="8.2" width="0.8" height="2.8" fill="#a8a8a8"/><text x="30.71" y="5.2" font-size="5" fill="#d8d8d8" text-anchor="middle" font-family="Liberation Sans">2</text><text x="60.32" y="5.2" font-size="5" fill="#d8d8d8" text-anchor="middle" font-family="Liberation Sans">4</text><text x="89.93" y="5.2" font-size="5" fill="#d8d8d8" text-anchor="middle" font-family="Liberation Sans">7</text><text x="119.54" y="5.2" font-size="5" fill="#d8d8d8" text-anchor="middle" font-family="Liberation Sans">9</text><text x="149.15" y="5.2" font-size="5" fill="#d8d8d8" text-anchor="middle" font-family="Liberation Sans">12</text><text x="178.76" y="5.2" font-size="5" fill="#d8d8d8" text-anchor="middle" font-family="Liberation Sans">14</text><text x="208.37" y="5.2" font-size="5" fill="#d8d8d8" text-anchor="middle" font-family="Liberation Sans">16</text><text x="237.98" y="5.2" font-size="5" fill="#d8d8d8" text-anchor="middle" font-family="Liberation Sans">19</text><text x="267.59" y="5.2" font-size="5" fill="#d8d8d8" text-anchor="middle" font-family="Liberation Sans">21</text><text x="297.20" y="5.2" font-size="5" fill="#d8d8d8" text-anchor="middle" font-family="Liberation Sans">24</text><text x="326.81" y="5.2" font-size="5" fill="#d8d8d8" text-anchor="middle" font-family="Liberation Sans">26</text><text x="356.42" y="5.2" font-size="5" fill="#d8d8d8" text-anchor="middle" font-family="Liberation Sans">28</text><text x="386.03" y="5.2" font-size="5" fill="#d8d8d8" text-anchor="middle" font-family="Liberation Sans">31</text><text x="415.64" y="5.2" font-size="5" fill="#d8d8d8" text-anchor="middle" font-family="Liberation Sans">33</text><text x="445.25" y="5.2" font-size="5" fill="#d8d8d8" text-anchor="middle" font-family="Liberation Sans">36</text><text x="5" y="7.9" font-size="5.5" fill="#9cc0dc" text-anchor="middle" font-family="Liberation Sans">in</text></svg><svg style="left:165px;top:45px;" width="10" height="352" viewBox="0 0 10 352"><rect x="0" y="0.80" width="3.5" height="0.8" fill="#a8a8a8"/><rect x="0" y="3.27" width="7" height="0.9" fill="#d0d0d0"/><rect x="0" y="5.74" width="3.5" height="0.8" fill="#a8a8a8"/><rect x="0" y="8.21" width="3.5" height="0.8" fill="#a8a8a8"/><rect x="0" y="10.68" width="3.5" height="0.8" fill="#a8a8a8"/><rect x="0" y="13.15" width="3.5" height="0.8" fill="#a8a8a8"/><rect x="0" y="15.62" width="3.5" height="0.8" fill="#a8a8a8"/><rect x="0" y="18.09" width="3.5" height="0.8" fill="#a8a8a8"/><rect x="0" y="20.55" width="3.5" height="0.8" fill="#a8a8a8"/><rect x="0" y="23.02" width="3.5" height="0.8" fill="#a8a8a8"/><rect x="0" y="25.49" width="3.5" height="0.8" fill="#a8a8a8"/><rect x="0" y="27.96" width="3.5" height="0.8" fill="#a8a8a8"/><rect x="0" y="30.43" width="3.5" height="0.8" fill="#a8a8a8"/><rect x="0" y="32.90" width="7" height="0.9" fill="#d0d0d0"/><rect x="0" y="35.37" width="3.5" height="0.8" fill="#a8a8a8"/><rect x="0" y="37.84" width="3.5" height="0.8" fill="#a8a8a8"/><rect x="0" y="40.31" width="3.5" height="0.8" fill="#a8a8a8"/><rect x="0" y="42.78" width="3.5" height="0.8" fill="#a8a8a8"/><rect x="0" y="45.25" width="3.5" height="0.8" fill="#a8a8a8"/><rect x="0" y="47.71" width="3.5" height="0.8" fill="#a8a8a8"/><rect x="0" y="50.18" width="3.5" height="0.8" fill="#a8a8a8"/><rect x="0" y="52.65" width="3.5" height="0.8" fill="#a8a8a8"/><rect x="0" y="55.12" width="3.5" height="0.8" fill="#a8a8a8"/><rect x="0" y="57.59" width="3.5" height="0.8" fill="#a8a8a8"/><rect x="0" y="60.06" width="3.5" height="0.8" fill="#a8a8a8"/><rect x="0" y="62.53" width="7" height="0.9" fill="#d0d0d0"/><rect x="0" y="65.00" width="3.5" height="0.8" fill="#a8a8a8"/><rect x="0" y="67.47" width="3.5" height="0.8" fill="#a8a8a8"/><rect x="0" y="69.94" width="3.5" height="0.8" fill="#a8a8a8"/><rect x="0" y="72.41" width="3.5" height="0.8" fill="#a8a8a8"/><rect x="0" y="74.88" width="3.5" height="0.8" fill="#a8a8a8"/><rect x="0" y="77.34" width="3.5" height="0.8" fill="#a8a8a8"/><rect x="0" y="79.81" width="3.5" height="0.8" fill="#a8a8a8"/><rect x="0" y="82.28" width="3.5" height="0.8" fill="#a8a8a8"/><rect x="0" y="84.75" width="3.5" height="0.8" fill="#a8a8a8"/><rect x="0" y="87.22" width="3.5" height="0.8" fill="#a8a8a8"/><rect x="0" y="89.69" width="3.5" height="0.8" fill="#a8a8a8"/><rect x="0" y="92.16" width="7" height="0.9" fill="#d0d0d0"/><rect x="0" y="94.63" width="3.5" height="0.8" fill="#a8a8a8"/><rect x="0" y="97.10" width="3.5" height="0.8" fill="#a8a8a8"/><rect x="0" y="99.57" width="3.5" height="0.8" fill="#a8a8a8"/><rect x="0" y="102.04" width="3.5" height="0.8" fill="#a8a8a8"/><rect x="0" y="104.51" width="3.5" height="0.8" fill="#a8a8a8"/><rect x="0" y="106.97" width="3.5" height="0.8" fill="#a8a8a8"/><rect x="0" y="109.44" width="3.5" height="0.8" fill="#a8a8a8"/><rect x="0" y="111.91" width="3.5" height="0.8" fill="#a8a8a8"/><rect x="0" y="114.38" width="3.5" height="0.8" fill="#a8a8a8"/><rect x="0" y="116.85" width="3.5" height="0.8" fill="#a8a8a8"/><rect x="0" y="119.32" width="3.5" height="0.8" fill="#a8a8a8"/><rect x="0" y="121.79" width="7" height="0.9" fill="#d0d0d0"/><rect x="0" y="124.26" width="3.5" height="0.8" fill="#a8a8a8"/><rect x="0" y="126.73" width="3.5" height="0.8" fill="#a8a8a8"/><rect x="0" y="129.20" width="3.5" height="0.8" fill="#a8a8a8"/><rect x="0" y="131.67" width="3.5" height="0.8" fill="#a8a8a8"/><rect x="0" y="134.14" width="3.5" height="0.8" fill="#a8a8a8"/><rect x="0" y="136.60" width="3.5" height="0.8" fill="#a8a8a8"/><rect x="0" y="139.07" width="3.5" height="0.8" fill="#a8a8a8"/><rect x="0" y="141.54" width="3.5" height="0.8" fill="#a8a8a8"/><rect x="0" y="144.01" width="3.5" height="0.8" fill="#a8a8a8"/><rect x="0" y="146.48" width="3.5" height="0.8" fill="#a8a8a8"/><rect x="0" y="148.95" width="3.5" height="0.8" fill="#a8a8a8"/><rect x="0" y="151.42" width="7" height="0.9" fill="#d0d0d0"/><rect x="0" y="153.89" width="3.5" height="0.8" fill="#a8a8a8"/><rect x="0" y="156.36" width="3.5" height="0.8" fill="#a8a8a8"/><rect x="0" y="158.83" width="3.5" height="0.8" fill="#a8a8a8"/><rect x="0" y="161.30" width="3.5" height="0.8" fill="#a8a8a8"/><rect x="0" y="163.77" width="3.5" height="0.8" fill="#a8a8a8"/><rect x="0" y="166.23" width="3.5" height="0.8" fill="#a8a8a8"/><rect x="0" y="168.70" width="3.5" height="0.8" fill="#a8a8a8"/><rect x="0" y="171.17" width="3.5" height="0.8" fill="#a8a8a8"/><rect x="0" y="173.64" width="3.5" height="0.8" fill="#a8a8a8"/><rect x="0" y="176.11" width="3.5" height="0.8" fill="#a8a8a8"/><rect x="0" y="178.58" width="3.5" height="0.8" fill="#a8a8a8"/><rect x="0" y="181.05" width="7" height="0.9" fill="#d0d0d0"/><rect x="0" y="183.52" width="3.5" height="0.8" fill="#a8a8a8"/><rect x="0" y="185.99" width="3.5" height="0.8" fill="#a8a8a8"/><rect x="0" y="188.46" width="3.5" height="0.8" fill="#a8a8a8"/><rect x="0" y="190.93" width="3.5" height="0.8" fill="#a8a8a8"/><rect x="0" y="193.40" width="3.5" height="0.8" fill="#a8a8a8"/><rect x="0" y="195.86" width="3.5" height="0.8" fill="#a8a8a8"/><rect x="0" y="198.33" width="3.5" height="0.8" fill="#a8a8a8"/><rect x="0" y="200.80" width="3.5" height="0.8" fill="#a8a8a8"/><rect x="0" y="203.27" width="3.5" height="0.8" fill="#a8a8a8"/><rect x="0" y="205.74" width="3.5" height="0.8" fill="#a8a8a8"/><rect x="0" y="208.21" width="3.5" height="0.8" fill="#a8a8a8"/><rect x="0" y="210.68" width="7" height="0.9" fill="#d0d0d0"/><rect x="0" y="213.15" width="3.5" height="0.8" fill="#a8a8a8"/><rect x="0" y="215.62" width="3.5" height="0.8" fill="#a8a8a8"/><rect x="0" y="218.09" width="3.5" height="0.8" fill="#a8a8a8"/><rect x="0" y="220.56" width="3.5" height="0.8" fill="#a8a8a8"/><rect x="0" y="223.03" width="3.5" height="0.8" fill="#a8a8a8"/><rect x="0" y="225.49" width="3.5" height="0.8" fill="#a8a8a8"/><rect x="0" y="227.96" width="3.5" height="0.8" fill="#a8a8a8"/><rect x="0" y="230.43" width="3.5" height="0.8" fill="#a8a8a8"/><rect x="0" y="232.90" width="3.5" height="0.8" fill="#a8a8a8"/><rect x="0" y="235.37" width="3.5" height="0.8" fill="#a8a8a8"/><rect x="0" y="237.84" width="3.5" height="0.8" fill="#a8a8a8"/><rect x="0" y="240.31" width="7" height="0.9" fill="#d0d0d0"/><rect x="0" y="242.78" width="3.5" height="0.8" fill="#a8a8a8"/><rect x="0" y="245.25" width="3.5" height="0.8" fill="#a8a8a8"/><rect x="0" y="247.72" width="3.5" height="0.8" fill="#a8a8a8"/><rect x="0" y="250.19" width="3.5" height="0.8" fill="#a8a8a8"/><rect x="0" y="252.66" width="3.5" height="0.8" fill="#a8a8a8"/><rect x="0" y="255.12" width="3.5" height="0.8" fill="#a8a8a8"/><rect x="0" y="257.59" width="3.5" height="0.8" fill="#a8a8a8"/><rect x="0" y="260.06" width="3.5" height="0.8" fill="#a8a8a8"/><rect x="0" y="262.53" width="3.5" height="0.8" fill="#a8a8a8"/><rect x="0" y="265.00" width="3.5" height="0.8" fill="#a8a8a8"/><rect x="0" y="267.47" width="3.5" height="0.8" fill="#a8a8a8"/><rect x="0" y="269.94" width="7" height="0.9" fill="#d0d0d0"/><rect x="0" y="272.41" width="3.5" height="0.8" fill="#a8a8a8"/><rect x="0" y="274.88" width="3.5" height="0.8" fill="#a8a8a8"/><rect x="0" y="277.35" width="3.5" height="0.8" fill="#a8a8a8"/><rect x="0" y="279.82" width="3.5" height="0.8" fill="#a8a8a8"/><rect x="0" y="282.29" width="3.5" height="0.8" fill="#a8a8a8"/><rect x="0" y="284.76" width="3.5" height="0.8" fill="#a8a8a8"/><rect x="0" y="287.22" width="3.5" height="0.8" fill="#a8a8a8"/><rect x="0" y="289.69" width="3.5" height="0.8" fill="#a8a8a8"/><rect x="0" y="292.16" width="3.5" height="0.8" fill="#a8a8a8"/><rect x="0" y="294.63" width="3.5" height="0.8" fill="#a8a8a8"/><rect x="0" y="297.10" width="3.5" height="0.8" fill="#a8a8a8"/><rect x="0" y="299.57" width="7" height="0.9" fill="#d0d0d0"/><rect x="0" y="302.04" width="3.5" height="0.8" fill="#a8a8a8"/><rect x="0" y="304.51" width="3.5" height="0.8" fill="#a8a8a8"/><rect x="0" y="306.98" width="3.5" height="0.8" fill="#a8a8a8"/><rect x="0" y="309.45" width="3.5" height="0.8" fill="#a8a8a8"/><rect x="0" y="311.92" width="3.5" height="0.8" fill="#a8a8a8"/><rect x="0" y="314.39" width="3.5" height="0.8" fill="#a8a8a8"/><rect x="0" y="316.85" width="3.5" height="0.8" fill="#a8a8a8"/><rect x="0" y="319.32" width="3.5" height="0.8" fill="#a8a8a8"/><rect x="0" y="321.79" width="3.5" height="0.8" fill="#a8a8a8"/><rect x="0" y="324.26" width="3.5" height="0.8" fill="#a8a8a8"/><rect x="0" y="326.73" width="3.5" height="0.8" fill="#a8a8a8"/><rect x="0" y="329.20" width="7" height="0.9" fill="#d0d0d0"/><rect x="0" y="331.67" width="3.5" height="0.8" fill="#a8a8a8"/><rect x="0" y="334.14" width="3.5" height="0.8" fill="#a8a8a8"/><rect x="0" y="336.61" width="3.5" height="0.8" fill="#a8a8a8"/><rect x="0" y="339.08" width="3.5" height="0.8" fill="#a8a8a8"/><rect x="0" y="341.55" width="3.5" height="0.8" fill="#a8a8a8"/><rect x="0" y="344.02" width="3.5" height="0.8" fill="#a8a8a8"/><rect x="0" y="346.48" width="3.5" height="0.8" fill="#a8a8a8"/><rect x="0" y="348.95" width="3.5" height="0.8" fill="#a8a8a8"/><text transform="translate(6.3,3.67) rotate(90)" font-size="5" fill="#d8d8d8" text-anchor="middle" font-family="Liberation Sans">2</text><text transform="translate(6.3,33.30) rotate(90)" font-size="5" fill="#d8d8d8" text-anchor="middle" font-family="Liberation Sans">0</text><text transform="translate(6.3,62.93) rotate(90)" font-size="5" fill="#d8d8d8" text-anchor="middle" font-family="Liberation Sans">2</text><text transform="translate(6.3,92.56) rotate(90)" font-size="5" fill="#d8d8d8" text-anchor="middle" font-family="Liberation Sans">4</text><text transform="translate(6.3,122.19) rotate(90)" font-size="5" fill="#d8d8d8" text-anchor="middle" font-family="Liberation Sans">7</text><text transform="translate(6.3,151.82) rotate(90)" font-size="5" fill="#d8d8d8" text-anchor="middle" font-family="Liberation Sans">9</text><text transform="translate(6.3,181.45) rotate(90)" font-size="5" fill="#d8d8d8" text-anchor="middle" font-family="Liberation Sans">12</text><text transform="translate(6.3,211.08) rotate(90)" font-size="5" fill="#d8d8d8" text-anchor="middle" font-family="Liberation Sans">14</text><text transform="translate(6.3,240.71) rotate(90)" font-size="5" fill="#d8d8d8" text-anchor="middle" font-family="Liberation Sans">16</text><text transform="translate(6.3,270.34) rotate(90)" font-size="5" fill="#d8d8d8" text-anchor="middle" font-family="Liberation Sans">19</text><text transform="translate(6.3,299.97) rotate(90)" font-size="5" fill="#d8d8d8" text-anchor="middle" font-family="Liberation Sans">21</text><text transform="translate(6.3,329.60) rotate(90)" font-size="5" fill="#d8d8d8" text-anchor="middle" font-family="Liberation Sans">24</text></svg><div class="a" style="left:175px;top:45px;width:445px;height:352px;background:#474747;"></div><svg style="left:175px;top:45px;" width="445" height="352" viewBox="0 0 445 352"><line x1="7.90" y1="0" x2="7.90" y2="352" stroke="#444444" stroke-width="0.8"/><line x1="20.25" y1="0" x2="20.25" y2="352" stroke="#444444" stroke-width="0.8"/><line x1="32.59" y1="0" x2="32.59" y2="352" stroke="#444444" stroke-width="0.8"/><line x1="44.94" y1="0" x2="44.94" y2="352" stroke="#444444" stroke-width="0.8"/><line x1="57.28" y1="0" x2="57.28" y2="352" stroke="#444444" stroke-width="0.8"/><line x1="69.62" y1="0" x2="69.62" y2="352" stroke="#444444" stroke-width="0.8"/><line x1="81.97" y1="0" x2="81.97" y2="352" stroke="#444444" stroke-width="0.8"/><line x1="94.31" y1="0" x2="94.31" y2="352" stroke="#444444" stroke-width="0.8"/><line x1="106.66" y1="0" x2="106.66" y2="352" stroke="#444444" stroke-width="0.8"/><line x1="119.00" y1="0" x2="119.00" y2="352" stroke="#444444" stroke-width="0.8"/><line x1="131.35" y1="0" x2="131.35" y2="352" stroke="#444444" stroke-width="0.8"/><line x1="143.70" y1="0" x2="143.70" y2="352" stroke="#444444" stroke-width="0.8"/><line x1="156.04" y1="0" x2="156.04" y2="352" stroke="#444444" stroke-width="0.8"/><line x1="168.38" y1="0" x2="168.38" y2="352" stroke="#444444" stroke-width="0.8"/><line x1="180.73" y1="0" x2="180.73" y2="352" stroke="#444444" stroke-width="0.8"/><line x1="193.08" y1="0" x2="193.08" y2="352" stroke="#444444" stroke-width="0.8"/><line x1="205.42" y1="0" x2="205.42" y2="352" stroke="#444444" stroke-width="0.8"/><line x1="217.76" y1="0" x2="217.76" y2="352" stroke="#444444" stroke-width="0.8"/><line x1="230.11" y1="0" x2="230.11" y2="352" stroke="#444444" stroke-width="0.8"/><line x1="242.46" y1="0" x2="242.46" y2="352" stroke="#444444" stroke-width="0.8"/><line x1="254.80" y1="0" x2="254.80" y2="352" stroke="#444444" stroke-width="0.8"/><line x1="267.14" y1="0" x2="267.14" y2="352" stroke="#444444" stroke-width="0.8"/><line x1="279.49" y1="0" x2="279.49" y2="352" stroke="#444444" stroke-width="0.8"/><line x1="291.84" y1="0" x2="291.84" y2="352" stroke="#444444" stroke-width="0.8"/><line x1="304.18" y1="0" x2="304.18" y2="352" stroke="#444444" stroke-width="0.8"/><line x1="316.52" y1="0" x2="316.52" y2="352" stroke="#444444" stroke-width="0.8"/><line x1="328.87" y1="0" x2="328.87" y2="352" stroke="#444444" stroke-width="0.8"/><line x1="341.22" y1="0" x2="341.22" y2="352" stroke="#444444" stroke-width="0.8"/><line x1="353.56" y1="0" x2="353.56" y2="352" stroke="#444444" stroke-width="0.8"/><line x1="365.90" y1="0" x2="365.90" y2="352" stroke="#444444" stroke-width="0.8"/><line x1="378.25" y1="0" x2="378.25" y2="352" stroke="#444444" stroke-width="0.8"/><line x1="390.60" y1="0" x2="390.60" y2="352" stroke="#444444" stroke-width="0.8"/><line x1="402.94" y1="0" x2="402.94" y2="352" stroke="#444444" stroke-width="0.8"/><line x1="415.29" y1="0" x2="415.29" y2="352" stroke="#444444" stroke-width="0.8"/><line x1="427.63" y1="0" x2="427.63" y2="352" stroke="#444444" stroke-width="0.8"/><line x1="439.98" y1="0" x2="439.98" y2="352" stroke="#444444" stroke-width="0.8"/></svg><div class="a" style="left:175px;top:73px;width:440px;height:296.3px;background:#ffffff;box-shadow:0 1px 2px rgba(0,0,0,0.45)"></div><svg style="left:175px;top:73px;" width="440" height="296" viewBox="0 0 440 296"><line x1="7.90" y1="0" x2="7.90" y2="296" stroke="#e9ebed" stroke-width="0.8"/><line x1="20.25" y1="0" x2="20.25" y2="296" stroke="#e9ebed" stroke-width="0.8"/><line x1="32.59" y1="0" x2="32.59" y2="296" stroke="#e9ebed" stroke-width="0.8"/><line x1="44.94" y1="0" x2="44.94" y2="296" stroke="#e9ebed" stroke-width="0.8"/><line x1="57.28" y1="0" x2="57.28" y2="296" stroke="#e9ebed" stroke-width="0.8"/><line x1="69.62" y1="0" x2="69.62" y2="296" stroke="#e9ebed" stroke-width="0.8"/><line x1="81.97" y1="0" x2="81.97" y2="296" stroke="#e9ebed" stroke-width="0.8"/><line x1="94.31" y1="0" x2="94.31" y2="296" stroke="#e9ebed" stroke-width="0.8"/><line x1="106.66" y1="0" x2="106.66" y2="296" stroke="#e9ebed" stroke-width="0.8"/><line x1="119.00" y1="0" x2="119.00" y2="296" stroke="#e9ebed" stroke-width="0.8"/><line x1="131.35" y1="0" x2="131.35" y2="296" stroke="#e9ebed" stroke-width="0.8"/><line x1="143.70" y1="0" x2="143.70" y2="296" stroke="#e9ebed" stroke-width="0.8"/><line x1="156.04" y1="0" x2="156.04" y2="296" stroke="#e9ebed" stroke-width="0.8"/><line x1="168.38" y1="0" x2="168.38" y2="296" stroke="#e9ebed" stroke-width="0.8"/><line x1="180.73" y1="0" x2="180.73" y2="296" stroke="#e9ebed" stroke-width="0.8"/><line x1="193.08" y1="0" x2="193.08" y2="296" stroke="#e9ebed" stroke-width="0.8"/><line x1="205.42" y1="0" x2="205.42" y2="296" stroke="#e9ebed" stroke-width="0.8"/><line x1="217.76" y1="0" x2="217.76" y2="296" stroke="#e9ebed" stroke-width="0.8"/><line x1="230.11" y1="0" x2="230.11" y2="296" stroke="#e9ebed" stroke-width="0.8"/><line x1="242.46" y1="0" x2="242.46" y2="296" stroke="#e9ebed" stroke-width="0.8"/><line x1="254.80" y1="0" x2="254.80" y2="296" stroke="#e9ebed" stroke-width="0.8"/><line x1="267.14" y1="0" x2="267.14" y2="296" stroke="#e9ebed" stroke-width="0.8"/><line x1="279.49" y1="0" x2="279.49" y2="296" stroke="#e9ebed" stroke-width="0.8"/><line x1="291.84" y1="0" x2="291.84" y2="296" stroke="#e9ebed" stroke-width="0.8"/><line x1="304.18" y1="0" x2="304.18" y2="296" stroke="#e9ebed" stroke-width="0.8"/><line x1="316.52" y1="0" x2="316.52" y2="296" stroke="#e9ebed" stroke-width="0.8"/><line x1="328.87" y1="0" x2="328.87" y2="296" stroke="#e9ebed" stroke-width="0.8"/><line x1="341.22" y1="0" x2="341.22" y2="296" stroke="#e9ebed" stroke-width="0.8"/><line x1="353.56" y1="0" x2="353.56" y2="296" stroke="#e9ebed" stroke-width="0.8"/><line x1="365.90" y1="0" x2="365.90" y2="296" stroke="#e9ebed" stroke-width="0.8"/><line x1="378.25" y1="0" x2="378.25" y2="296" stroke="#e9ebed" stroke-width="0.8"/><line x1="390.60" y1="0" x2="390.60" y2="296" stroke="#e9ebed" stroke-width="0.8"/><line x1="402.94" y1="0" x2="402.94" y2="296" stroke="#e9ebed" stroke-width="0.8"/><line x1="415.29" y1="0" x2="415.29" y2="296" stroke="#e9ebed" stroke-width="0.8"/><line x1="427.63" y1="0" x2="427.63" y2="296" stroke="#e9ebed" stroke-width="0.8"/><line x1="0" y1="12.90" x2="440" y2="12.90" stroke="#e9ebed" stroke-width="0.8"/><line x1="0" y1="25.24" x2="440" y2="25.24" stroke="#e9ebed" stroke-width="0.8"/><line x1="0" y1="37.58" x2="440" y2="37.58" stroke="#e9ebed" stroke-width="0.8"/><line x1="0" y1="49.92" x2="440" y2="49.92" stroke="#e9ebed" stroke-width="0.8"/><line x1="0" y1="62.26" x2="440" y2="62.26" stroke="#e9ebed" stroke-width="0.8"/><line x1="0" y1="74.60" x2="440" y2="74.60" stroke="#e9ebed" stroke-width="0.8"/><line x1="0" y1="86.94" x2="440" y2="86.94" stroke="#e9ebed" stroke-width="0.8"/><line x1="0" y1="99.28" x2="440" y2="99.28" stroke="#e9ebed" stroke-width="0.8"/><line x1="0" y1="111.62" x2="440" y2="111.62" stroke="#e9ebed" stroke-width="0.8"/><line x1="0" y1="123.96" x2="440" y2="123.96" stroke="#e9ebed" stroke-width="0.8"/><line x1="0" y1="136.30" x2="440" y2="136.30" stroke="#e9ebed" stroke-width="0.8"/><line x1="0" y1="148.64" x2="440" y2="148.64" stroke="#e9ebed" stroke-width="0.8"/><line x1="0" y1="160.98" x2="440" y2="160.98" stroke="#e9ebed" stroke-width="0.8"/><line x1="0" y1="173.32" x2="440" y2="173.32" stroke="#e9ebed" stroke-width="0.8"/><line x1="0" y1="185.66" x2="440" y2="185.66" stroke="#e9ebed" stroke-width="0.8"/><line x1="0" y1="198.00" x2="440" y2="198.00" stroke="#e9ebed" stroke-width="0.8"/><line x1="0" y1="210.34" x2="440" y2="210.34" stroke="#e9ebed" stroke-width="0.8"/><line x1="0" y1="222.68" x2="440" y2="222.68" stroke="#e9ebed" stroke-width="0.8"/><line x1="0" y1="235.02" x2="440" y2="235.02" stroke="#e9ebed" stroke-width="0.8"/><line x1="0" y1="247.36" x2="440" y2="247.36" stroke="#e9ebed" stroke-width="0.8"/><line x1="0" y1="259.70" x2="440" y2="259.70" stroke="#e9ebed" stroke-width="0.8"/><line x1="0" y1="272.04" x2="440" y2="272.04" stroke="#e9ebed" stroke-width="0.8"/><line x1="0" y1="284.38" x2="440" y2="284.38" stroke="#e9ebed" stroke-width="0.8"/><rect x="9.5" y="17.5" width="210.10000000000002" height="135.8" fill="none" stroke="#e0e8b4" stroke-width="0.85"/><rect x="219.60000000000002" y="17.5" width="209.69999999999993" height="135.8" fill="none" stroke="#e0e8b4" stroke-width="0.85"/><rect x="9.5" y="156.1" width="210.10000000000002" height="135.50000000000003" fill="none" stroke="#e0e8b4" stroke-width="0.85"/><circle cx="54.40" cy="61.40" r="43.2" fill="none" stroke="#969696" stroke-width="0.6"/><circle cx="119.40" cy="111.80" r="39.5" fill="none" stroke="#969696" stroke-width="0.6"/><circle cx="119.40" cy="111.80" r="34.5" fill="none" stroke="#969696" stroke-width="0.6"/><circle cx="119.40" cy="111.80" r="30" fill="none" stroke="#969696" stroke-width="0.6"/><circle cx="178.50" cy="57.90" r="40.5" fill="none" stroke="#969696" stroke-width="0.6"/><circle cx="178.50" cy="57.90" r="35.3" fill="none" stroke="#969696" stroke-width="0.6"/><circle cx="259.00" cy="56.40" r="39" fill="none" stroke="#969696" stroke-width="0.6"/><circle cx="259.00" cy="56.40" r="34" fill="none" stroke="#969696" stroke-width="0.6"/><circle cx="318.00" cy="110.60" r="42" fill="none" stroke="#969696" stroke-width="0.6"/><circle cx="318.00" cy="110.60" r="36.6" fill="none" stroke="#969696" stroke-width="0.6"/><circle cx="318.00" cy="110.60" r="26" fill="none" stroke="#969696" stroke-width="0.6"/><circle cx="318.00" cy="110.60" r="31.2" fill="none" stroke="#c83a78" stroke-width="0.9"/><circle cx="386.20" cy="60.90" r="42.4" fill="none" stroke="#969696" stroke-width="0.6"/><circle cx="386.20" cy="60.90" r="37.2" fill="none" stroke="#969696" stroke-width="0.6"/><circle cx="52.30" cy="199.30" r="43.1" fill="none" stroke="#969696" stroke-width="0.6"/><circle cx="52.30" cy="199.30" r="37.2" fill="none" stroke="#969696" stroke-width="0.6"/><circle cx="52.30" cy="199.30" r="32.3" fill="none" stroke="#969696" stroke-width="0.6"/><circle cx="52.30" cy="199.30" r="27.8" fill="none" stroke="#969696" stroke-width="0.6"/><circle cx="138.90" cy="199.50" r="43.3" fill="none" stroke="#969696" stroke-width="0.6"/><clipPath id="cc1"><circle cx="138.89999999999998" cy="199.5" r="39.35"/></clipPath><clipPath id="cc2"><circle cx="138.89999999999998" cy="199.5" r="40.6"/></clipPath><mask id="gm" maskUnits="userSpaceOnUse" x="0" y="0" width="440" height="296"><rect x="0" y="0" width="440" height="296" fill="#fff"/><g clip-path="url(#cc1)"><rect x="89.22" y="149.82" width="31.96" height="32.36" rx="1.6" fill="#000"/><rect x="89.22" y="185.42" width="31.96" height="28.26" rx="1.6" fill="#000"/><rect x="89.22" y="216.92" width="31.96" height="32.26" rx="1.6" fill="#000"/><rect x="124.32" y="149.82" width="29.06" height="32.36" rx="1.6" fill="#000"/><rect x="124.32" y="185.42" width="29.06" height="28.26" rx="1.6" fill="#000"/><rect x="124.32" y="216.92" width="29.06" height="32.26" rx="1.6" fill="#000"/><rect x="156.52" y="149.82" width="32.06" height="32.36" rx="1.6" fill="#000"/><rect x="156.52" y="185.42" width="32.06" height="28.26" rx="1.6" fill="#000"/><rect x="156.52" y="216.92" width="32.06" height="32.26" rx="1.6" fill="#000"/></g><g clip-path="url(#cc2)"><rect x="121.82" y="154.5" width="1.86" height="90" fill="#000"/><rect x="93.89999999999998" y="182.82" width="90" height="1.96" fill="#000"/><rect x="154.02" y="154.5" width="1.86" height="90" fill="#000"/><rect x="93.89999999999998" y="214.32" width="90" height="1.96" fill="#000"/></g></mask><circle cx="138.89999999999998" cy="199.5" r="40.0" fill="#a8a8a8" mask="url(#gm)"/><rect x="81.00" y="85.20" width="3.6" height="3.6" rx="1.2" fill="#f08a66" fill-opacity="0.35"/><rect x="142.00" y="81.80" width="3.6" height="3.6" rx="1.2" fill="#f08a66" fill-opacity="0.35"/><rect x="143.00" y="91.90" width="3.6" height="3.6" rx="1.2" fill="#f08a66" fill-opacity="0.35"/><rect x="203.10" y="28.30" width="3.6" height="3.6" rx="1.2" fill="#f08a66" fill-opacity="0.35"/><rect x="281.10" y="27.00" width="3.6" height="3.6" rx="1.2" fill="#f08a66" fill-opacity="0.35"/><rect x="341.40" y="78.20" width="3.6" height="3.6" rx="1.2" fill="#f08a66" fill-opacity="0.35"/><rect x="338.50" y="84.50" width="3.6" height="3.6" rx="1.2" fill="#f08a66" fill-opacity="0.35"/><rect x="339.40" y="92.90" width="3.6" height="3.6" rx="1.2" fill="#f08a66" fill-opacity="0.35"/><rect x="415.20" y="32.90" width="3.6" height="3.6" rx="1.2" fill="#f08a66" fill-opacity="0.35"/><rect x="73.10" y="170.40" width="3.6" height="3.6" rx="1.2" fill="#f08a66" fill-opacity="0.35"/><rect x="83.20" y="174.30" width="3.6" height="3.6" rx="1.2" fill="#f08a66" fill-opacity="0.35"/><rect x="75.10" y="179.80" width="3.6" height="3.6" rx="1.2" fill="#f08a66" fill-opacity="0.35"/></svg><div class="a" style="left:620px;top:35px;width:7px;height:362px;background:#4a4a4a;"></div><div class="a" style="left:627px;top:35px;width:173px;height:362px;background:#3a3a3a;"></div><div class="a" style="left:627px;top:34px;width:173px;height:18px;background:#2e2e2e;"></div><div class="t" style="left:629.90px;top:39.70px;font-size:7.2px;color:#e6e6e6;transform:scaleX(0.895);">Active Project</div><div class="t" style="left:631.10px;top:61.60px;font-size:6.6px;color:#e4e4e4;transform:scaleX(0.818);">Name:</div><div class="a" style="left:693px;top:57.1px;width:104.5px;height:12.300000000000004px;background:#262626;border-radius:3px"></div><div class="t" style="left:696.00px;top:60.90px;font-size:6.6px;color:#e8e8e8;transform:scaleX(0.913);">Planet Base</div><div class="t" style="left:631.10px;top:77.70px;font-size:6.6px;color:#e4e4e4;transform:scaleX(0.885);">Unit of Measurement</div><div class="a" style="left:693px;top:73.2px;width:104.5px;height:12.399999999999991px;background:#262626;border-radius:3px"></div><div class="t" style="left:698.30px;top:77.00px;font-size:6.6px;color:#e8e8e8;transform:scaleX(0.885);">Inches</div><svg style="left:789px;top:78px;" width="5" height="3" viewBox="0 0 5 3"><path d="M0 0 L5 0 L2.5 3 Z" fill="#e0e0e0"/></svg><div class="t" style="left:631.10px;top:93.60px;font-size:6.6px;color:#e4e4e4;transform:scaleX(0.914);">Grid</div><svg style="left:692.5px;top:92px;" width="8" height="8" viewBox="0 0 8 8"><circle cx="4" cy="3.9" r="3.6" fill="#d8d8d8"/></svg><div class="t" style="left:702.30px;top:93.10px;font-size:6.6px;color:#e4e4e4;transform:scaleX(1.060);">Off</div><svg style="left:724.1px;top:92px;" width="8" height="8" viewBox="0 0 8 8"><circle cx="4" cy="3.9" r="3.05" fill="#1a86c8" stroke="#ffffff" stroke-width="0.95"/></svg><div class="t" style="left:734.00px;top:93.10px;font-size:6.6px;color:#e4e4e4;transform:scaleX(0.852);">On</div><div class="a" style="left:693px;top:106px;width:28.799999999999955px;height:12.5px;background:#262626;border-radius:3px"></div><div class="a" style="left:725px;top:106px;width:31.200000000000045px;height:12.5px;background:#262626;border-radius:3px"></div><div class="t" style="left:696.30px;top:109.00px;font-size:7.2px;color:#f0f0f0;font-weight:bold;transform:scaleX(0.674);">1</div><div class="t" style="left:728.10px;top:109.00px;font-size:7.2px;color:#f0f0f0;font-weight:bold;transform:scaleX(0.674);">1</div><div class="t" style="left:700.00px;top:120.20px;font-size:6.6px;color:#bdbdbd;transform:scaleX(0.860);">Width</div><div class="t" style="left:732.50px;top:120.20px;font-size:6.6px;color:#bdbdbd;transform:scaleX(0.828);">Height</div><div class="a" style="left:627px;top:132px;width:173px;height:1px;background:#333333;"></div><div class="a" style="left:627px;top:133px;width:173px;height:15.5px;background:#2e2e2e;"></div><div class="t" style="left:629.90px;top:136.90px;font-size:7.2px;color:#e6e6e6;transform:scaleX(0.858);">Vector Engraving Parameters</div><svg style="left:715.5px;top:139px;" width="6" height="3.5" viewBox="0 0 6 3.5"><path d="M0 0 L6 0 L3 3.5 Z" fill="#e0e0e0"/></svg><svg style="left:785px;top:136.5px;" width="15" height="7" viewBox="0 0 15 7"><rect x="2" y="1.5" width="12" height="4" rx="2" fill="#555"/><circle cx="4" cy="3.5" r="3" fill="#f0f0f0"/></svg><div class="t" style="left:656.00px;top:155.25px;font-size:6.3px;color:#d0d0d0;transform:scaleX(0.763);">Speed %</div><div class="t" style="left:692.80px;top:155.25px;font-size:6.3px;color:#d0d0d0;transform:scaleX(0.813);">Power %</div><div class="t" style="left:729.50px;top:155.25px;font-size:6.3px;color:#d0d0d0;transform:scaleX(0.875);">Current %</div><div class="t" style="left:772.50px;top:155.25px;font-size:6.3px;color:#d0d0d0;transform:scaleX(0.765);">Passes</div><div class="a" style="left:629px;top:163.5px;width:171px;height:1px;background:#5a5670;"></div><div class="a" style="left:648.3px;top:168.8px;width:34.5px;height:10.899999999999977px;background:#282828;border-radius:3px"></div><div class="t" style="left:651.30px;top:171.75px;font-size:6.8px;color:#e8e8e8;transform:scaleX(0.922);">100</div><div class="a" style="left:685.3px;top:168.8px;width:35.200000000000045px;height:10.899999999999977px;background:#282828;border-radius:3px"></div><div class="t" style="left:688.30px;top:171.75px;font-size:6.8px;color:#e8e8e8;transform:scaleX(0.922);">5</div><div class="a" style="left:723px;top:168.8px;width:37px;height:10.899999999999977px;background:#282828;border-radius:3px"></div><div class="t" style="left:726.00px;top:171.75px;font-size:6.8px;color:#e8e8e8;transform:scaleX(0.922);">80</div><div class="a" style="left:762.9px;top:168.8px;width:34.89999999999998px;height:10.899999999999977px;background:#282828;border-radius:3px"></div><div class="t" style="left:765.90px;top:171.75px;font-size:6.8px;color:#e8e8e8;transform:scaleX(0.922);">1</div><div class="a" style="left:636px;top:170.25px;width:8px;height:8px;background:#e8561c;"></div><div class="a" style="left:631.3px;top:170.35000000000002px;width:1.4px;height:1.4px;background:#1a86c8;border-radius:1px"></div><div class="a" style="left:631.3px;top:173.55px;width:1.4px;height:1.4px;background:#1a86c8;border-radius:1px"></div><div class="a" style="left:631.3px;top:176.75px;width:1.4px;height:1.4px;background:#1a86c8;border-radius:1px"></div><div class="a" style="left:648.3px;top:184.1px;width:34.5px;height:11.800000000000011px;background:#282828;border-radius:3px"></div><div class="t" style="left:651.30px;top:187.50px;font-size:6.8px;color:#e8e8e8;transform:scaleX(0.922);">100</div><div class="a" style="left:685.3px;top:184.1px;width:35.200000000000045px;height:11.800000000000011px;background:#282828;border-radius:3px"></div><div class="t" style="left:688.30px;top:187.50px;font-size:6.8px;color:#e8e8e8;transform:scaleX(0.922);">50</div><div class="a" style="left:723px;top:184.1px;width:37px;height:11.800000000000011px;background:#282828;border-radius:3px"></div><div class="t" style="left:726.00px;top:187.50px;font-size:6.8px;color:#e8e8e8;transform:scaleX(0.922);">100</div><div class="a" style="left:762.9px;top:184.1px;width:34.89999999999998px;height:11.800000000000011px;background:#282828;border-radius:3px"></div><div class="t" style="left:765.90px;top:187.50px;font-size:6.8px;color:#e8e8e8;transform:scaleX(0.922);">1</div><div class="a" style="left:636px;top:186.0px;width:8px;height:8px;background:#222222;"></div><div class="a" style="left:631.3px;top:186.10000000000002px;width:1.4px;height:1.4px;background:#1a86c8;border-radius:1px"></div><div class="a" style="left:631.3px;top:189.3px;width:1.4px;height:1.4px;background:#1a86c8;border-radius:1px"></div><div class="a" style="left:631.3px;top:192.5px;width:1.4px;height:1.4px;background:#1a86c8;border-radius:1px"></div><div class="a" style="left:648.3px;top:200.1px;width:34.5px;height:11.099999999999994px;background:#282828;border-radius:3px"></div><div class="t" style="left:651.30px;top:203.15px;font-size:6.8px;color:#5c5c5c;transform:scaleX(0.922);">100</div><div class="a" style="left:685.3px;top:200.1px;width:35.200000000000045px;height:11.099999999999994px;background:#282828;border-radius:3px"></div><div class="t" style="left:688.30px;top:203.15px;font-size:6.8px;color:#5c5c5c;transform:scaleX(0.922);">100</div><div class="a" style="left:723px;top:200.1px;width:37px;height:11.099999999999994px;background:#282828;border-radius:3px"></div><div class="t" style="left:726.00px;top:203.15px;font-size:6.8px;color:#5c5c5c;transform:scaleX(0.922);">100</div><div class="a" style="left:762.9px;top:200.1px;width:34.89999999999998px;height:11.099999999999994px;background:#282828;border-radius:3px"></div><div class="t" style="left:765.90px;top:203.15px;font-size:6.8px;color:#5c5c5c;transform:scaleX(0.922);">0</div><div class="a" style="left:636px;top:201.64999999999998px;width:8px;height:8px;background:#4d5530;"></div><div class="a" style="left:631.3px;top:201.75px;width:1.4px;height:1.4px;background:#1a86c8;border-radius:1px"></div><div class="a" style="left:631.3px;top:204.95px;width:1.4px;height:1.4px;background:#1a86c8;border-radius:1px"></div><div class="a" style="left:631.3px;top:208.14999999999998px;width:1.4px;height:1.4px;background:#1a86c8;border-radius:1px"></div><div class="a" style="left:627px;top:212px;width:173px;height:0.8px;background:#4a4a4a;"></div><div class="a" style="left:627px;top:212.6px;width:173px;height:17px;background:#2e2e2e;"></div><div class="t" style="left:629.90px;top:218.10px;font-size:7.2px;color:#e6e6e6;transform:scaleX(0.861);">Cost Estimate</div><svg style="left:674.5px;top:218.5px;" width="3.5" height="5" viewBox="0 0 3.5 5"><path d="M0 0 L3.5 2.5 L0 5 Z" fill="#d0d0d0"/></svg><svg style="left:622px;top:209.5px;" width="4" height="6" viewBox="0 0 4 6"><path d="M0 0 L3.8 3 L0 6 Z" fill="#e8e8e8"/></svg><div class="a" style="left:0px;top:397px;width:800px;height:9px;background:#2a2a2a;"></div><div class="t" style="left:-1.50px;top:401.30px;font-size:6.6px;color:#a8a8a8;transform:scaleX(0.869);">Cursor:</div><div class="t" style="left:21.00px;top:401.30px;font-size:6.6px;color:#e03030;transform:scaleX(0.681);">X</div><div class="t" style="left:26.00px;top:401.30px;font-size:6.6px;color:#e8e8e8;transform:scaleX(0.872);">26.002 In</div><div class="t" style="left:67.00px;top:401.30px;font-size:6.6px;color:#30c040;transform:scaleX(0.795);">Y</div><div class="t" style="left:72.00px;top:401.30px;font-size:6.6px;color:#e8e8e8;transform:scaleX(0.839);">6.330 In</div><div class="a" style="left:114.5px;top:399px;width:0.8px;height:7px;background:#454545;"></div><div class="t" style="left:509.40px;top:401.30px;font-size:6.6px;color:#9a9a9a;transform:scaleX(0.945);">Rotary:</div><div class="t" style="left:532.00px;top:401.30px;font-size:6.6px;color:#f0f0f0;font-weight:bold;transform:scaleX(0.836);">Disabled</div><div class="a" style="left:557.5px;top:399px;width:0.8px;height:7px;background:#454545;"></div><div class="t" style="left:562.60px;top:401.30px;font-size:6.6px;color:#9a9a9a;transform:scaleX(0.904);">Workspace:</div><div class="t" style="left:597.00px;top:401.30px;font-size:6.6px;color:#f0f0f0;font-weight:bold;transform:scaleX(0.810);">Loaded</div><svg style="left:661.5px;top:400.5px;" width="11" height="5" viewBox="0 0 11 5"><path d="M2.5 0.3 L0.5 2.5 L2.5 4.7 M8.5 0.3 L10.5 2.5 L8.5 4.7" fill="none" stroke="#3cb85a" stroke-width="1"/><g fill="#3cb85a"><circle cx="4" cy="2.6" r="0.55"/><circle cx="5.5" cy="2.6" r="0.55"/><circle cx="7" cy="2.6" r="0.55"/></g></svg><div class="a" style="left:677px;top:401px;width:25px;height:5px;background:#0a0a0a;border-radius:2.5px"></div><div class="a" style="left:677px;top:401px;width:13px;height:5px;background:#e3d400;border-radius:2.5px"></div><svg style="left:50px;top:344px;" width="50" height="48" viewBox="0 0 50 48"><g transform="scale(0.1182)" fill="#858585"><path d="M38 42 L215 42 L215 100 Q155 105 128 160 Q106 205 105 372 L38 372 Z"/><path d="M230 42 Q328 38 364 124 L168 306 Q238 314 302 262 L374 290 Q342 378 212 378 Q130 378 103 352 L264 100 L230 100 Z"/><rect x="318" y="222" width="22" height="22"/></g></svg><div class="t" style="left:91.30px;top:359.70px;font-size:15px;color:#858585;font-weight:bold;transform:scaleX(0.899);">3</div>
</body></html>
